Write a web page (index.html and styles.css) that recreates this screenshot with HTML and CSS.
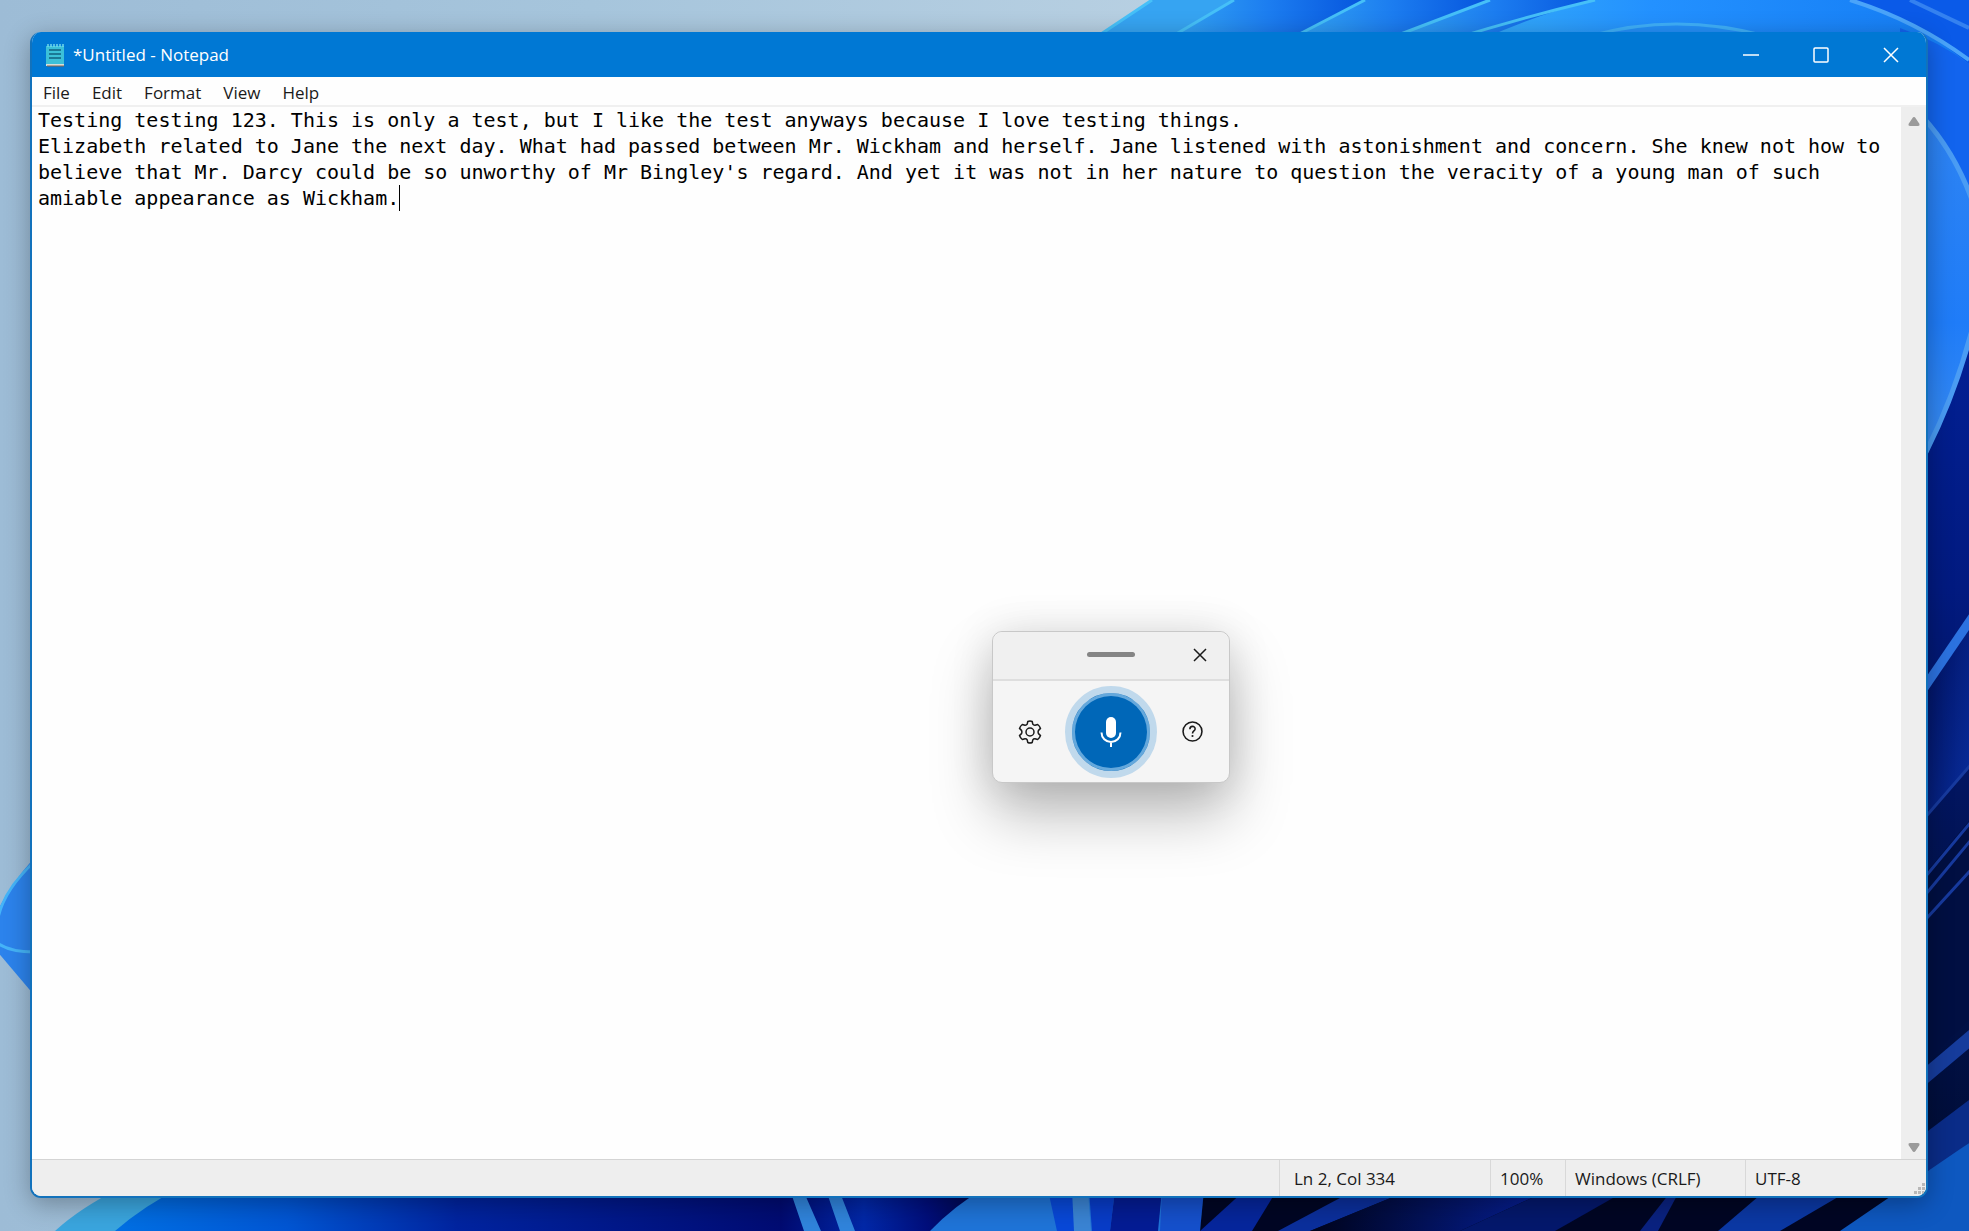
FILE: index.html
```html
<!DOCTYPE html>
<html lang="en">
<head>
  <meta charset="UTF-8" />
  <meta name="viewport" content="width=device-width, initial-scale=1.0" />
  <title>*Untitled - Notepad</title>
  <link rel="stylesheet" href="styles.css">
</head>
<body>

  <svg class="wallpaper" viewBox="0 0 1969 1231" preserveAspectRatio="none" aria-hidden="true">
    <defs>
      <linearGradient id="sky" x1="0" y1="0" x2="1" y2="0">
        <stop offset="0" stop-color="#9dbcd6" />
        <stop offset="0.3" stop-color="#a6c5dc" />
        <stop offset="0.6" stop-color="#b8d0e2" />
      </linearGradient>
      <linearGradient id="ribbon" x1="0" y1="0" x2="1" y2="0">
        <stop offset="0" stop-color="#36a8f4" />
        <stop offset="0.5" stop-color="#1c7df0" />
        <stop offset="1" stop-color="#0452dc" />
      </linearGradient>
      <linearGradient id="bloom" x1="0" y1="0" x2="1" y2="0">
        <stop offset="0" stop-color="#38b0f8" />
        <stop offset="0.4" stop-color="#2391ff" />
        <stop offset="1" stop-color="#147cf4" />
      </linearGradient>
      <linearGradient id="petal" x1="0" y1="0" x2="0" y2="1">
        <stop offset="0" stop-color="#2f84f2" />
        <stop offset="0.6" stop-color="#1f7cf8" />
        <stop offset="1" stop-color="#3c8df0" />
      </linearGradient>
      <linearGradient id="deep" x1="0" y1="0" x2="1" y2="0">
        <stop offset="0" stop-color="#0070e4" />
        <stop offset="0.25" stop-color="#0056d4" />
        <stop offset="0.5" stop-color="#0024a0" />
        <stop offset="1" stop-color="#000a70" />
      </linearGradient>
      <linearGradient id="shade" x1="0" y1="0" x2="1" y2="0">
        <stop offset="0" stop-color="#000a70" />
        <stop offset="0.4" stop-color="#0228a8" />
        <stop offset="0.7" stop-color="#000e7c" />
        <stop offset="1" stop-color="#00053c" />
      </linearGradient>
      <linearGradient id="night" x1="0" y1="0" x2="0" y2="1">
        <stop offset="0" stop-color="#02229c" />
        <stop offset="0.35" stop-color="#021a80" />
        <stop offset="0.6" stop-color="#021458" />
        <stop offset="1" stop-color="#000c30" />
      </linearGradient>
      <linearGradient id="fold" x1="0" y1="0" x2="1" y2="1">
        <stop offset="0" stop-color="#000b50" />
        <stop offset="1" stop-color="#0a34ae" />
      </linearGradient>
      <linearGradient id="dusk" x1="0" y1="0" x2="1" y2="0">
        <stop offset="0" stop-color="#00041c" />
        <stop offset="1" stop-color="#06209a" />
      </linearGradient>
    </defs>

    <rect width="1969" height="1231" fill="url(#sky)" />

    <!-- top ribbons -->
    <path d="M1152 0H1969V40H1092Z" fill="#36a4f2" />
    <path d="M1234 0H1372L1294 40H1166Z" fill="url(#ribbon)" />
    <path d="M1365 0H1496L1392 40H1288Z" fill="url(#ribbon)" />
    <path d="M1490 0H1605L1500 40H1385Z" fill="url(#ribbon)" />
    <path d="M1850 0H1969V140H1900Z" fill="#0a5ae8" />
    <path d="M1595 0H1850Q1915 20 1969 64V240H1900V60H1440Q1520 18 1595 0Z" fill="url(#bloom)" />
    <path d="M1152 0L1092 40M1234 0L1166 40M1365 0L1288 40M1490 0L1385 40M1595 0Q1520 18 1450 40" fill="none" stroke="#46c0f8" stroke-width="3" />
    <path d="M1900 28Q1940 42 1969 64V240H1900Z" fill="#1264ee" />
    <path d="M1850 0Q1915 20 1969 60" fill="none" stroke="#4aa4fa" stroke-width="4" />
    <path d="M1910 0L1969 28" stroke="#3481f0" stroke-width="4" />
    <path d="M1590 36Q1675 12 1766 36" fill="#2490fa" stroke="#3fb0fa" stroke-width="3" />

    <!-- right side petal -->
    <path d="M1910 240H1969V1231H1910Z" fill="url(#night)" />
    <path d="M1910 105Q1956 145 1972 205V330Q1955 400 1920 468H1900Z" fill="url(#petal)" />
    <path d="M1914 108Q1952 145 1972 200M1972 330Q1955 395 1926 452" fill="none" stroke="#4a9cf4" stroke-width="5" />
    <path d="M1920 694L1969 620V766L1920 822Z" fill="url(#fold)" opacity="0.8" />
    <path d="M1920 694L1980 606" stroke="#2c72e0" stroke-width="9" />
    <path d="M1920 880L1969 821V1020L1920 1066Z" fill="#010f42" />
    <path d="M1916 828L1980 754M1916 888L1980 811M1916 906L1980 829M1916 930L1980 860" stroke="#173a9e" stroke-width="3" />
    <path d="M1916 1084L1980 1030" stroke="#163c9c" stroke-width="14" />
    <path d="M1916 1184L1969 1143V1100L1916 1140Z" fill="#0a2c88" />

    <!-- left petal -->
    <path d="M34 858Q6 890 -4 915V950L40 1002Z" fill="#2c83ec" />
    <path d="M34 862Q4 890 -2 918M-4 942Q8 952 34 952" fill="none" stroke="#45b4f8" stroke-width="3" />

    <!-- bottom edge -->
    <path d="M120 1188H1969V1231H55Q80 1208 120 1188Z" fill="#3aa5de" />
    <path d="M180 1188H800V1231H115Q145 1205 180 1188Z" fill="url(#deep)" />
    <path d="M780 1188H990V1231H780Z" fill="url(#shade)" />
    <path d="M790 1190H803L821 1231H804ZM826 1190H839L855 1231H840Z" fill="#3084dc" />
    <path d="M985 1188H1290V1231H930Q955 1205 985 1188Z" fill="#1f74d8" />
    <path d="M1048 1190H1074V1231H1057Z" fill="#0848d8" />
    <path d="M1072 1190H1088L1091 1231H1074Z" fill="#3a84d4" />
    <path d="M1089 1190H1115L1110 1231H1092Z" fill="#083cc8" />
    <path d="M1115 1190H1162L1158 1231H1110Z" fill="#041c94" />
    <path d="M1162 1190H1204L1200 1231H1160Z" fill="#1550cc" />
    <path d="M1204 1190H1969V1231H1200Z" fill="#010624" />
    <path d="M1245 1190H1277L1252 1231H1200Z" fill="#06269c" />
    <path d="M1355 1190H1410L1310 1231H1278Z" fill="#0b2f9c" />
    <path d="M1410 1190H1549L1460 1231H1310Z" fill="url(#dusk)" />
    <path d="M1549 1190H1627L1555 1231H1460Z" fill="#04186c" />
    <path d="M1672 1190H1680L1658 1231H1640Z" fill="#0a2280" />
    <path d="M1766 1190H1850L1780 1231H1718Z" fill="#0b38a4" />
    <path d="M1840 1231L1969 1143V1231Z" fill="#0e58c0" />
  </svg>

  <main class="window">
    <header class="titlebar">
      <svg class="app-icon" viewBox="0 0 20 24" aria-hidden="true">
        <path d="M1 3h18v19H1z" fill="#3cc0d8" />
        <path d="M1 21h18v2H1z" fill="#d3dedc" />
        <path d="M2 23h17" stroke="#8b6548" />
        <path d="M3 1v3M6 1v3M9 1v3M12 1v3M15 1v3M18 1v3" stroke="#6fd8ec" stroke-width="1.500" />
        <path d="M4 7h12M4 11h12M4 15h12" stroke="#116080" stroke-width="1.500" />
      </svg>
      <h1>*Untitled - Notepad</h1>
      <div class="window-buttons">
        <button type="button" aria-label="Minimize"><svg viewBox="0 0 16 16"><path d="M0 8h16" /></svg></button>
        <button type="button" aria-label="Maximize"><svg viewBox="0 0 16 16"><rect x="1" y="1" width="14" height="14" rx="1" /></svg></button>
        <button type="button" aria-label="Close"><svg viewBox="0 0 16 16"><path d="M1 1l14 14M15 1L1 15" /></svg></button>
      </div>
    </header>

    <nav class="menu">
      <button type="button">File</button>
      <button type="button">Edit</button>
      <button type="button">Format</button>
      <button type="button">View</button>
      <button type="button">Help</button>
    </nav>

    <div class="editor">
      <textarea aria-label="Text editor" spellcheck="false">Testing testing 123. This is only a test, but I like the test anyways because I love testing things.
Elizabeth related to Jane the next day. What had passed between Mr. Wickham and herself. Jane listened with astonishment and concern. She knew not how to believe that Mr. Darcy could be so unworthy of Mr Bingley's regard. And yet it was not in her nature to question the veracity of a young man of such amiable appearance as Wickham.</textarea>
      <span class="caret"></span>
      <div class="scrollbar">
        <button type="button" aria-label="Scroll up"><svg viewBox="0 0 12 9"><path d="M6 0q1 0 1.500 1l4 6q.5 2-1.500 2H2Q0 9 .5 7l4-6Q5 0 6 0z" /></svg></button>
        <button type="button" aria-label="Scroll down"><svg viewBox="0 0 12 9"><path d="M6 9q-1 0-1.500-1l-4-6Q0 0 2 0h8q2 0 1.500 2l-4 6Q7 9 6 9z" /></svg></button>
      </div>
    </div>

    <footer class="statusbar">
      <span class="position">Ln 2, Col 334</span>
      <span class="zoom">100%</span>
      <span class="ending">Windows (CRLF)</span>
      <span class="encoding">UTF-8</span>
      <svg class="grip" viewBox="0 0 12 12" aria-hidden="true"><path d="M9 0h3v3H9zM5 4h3v3H5zM9 4h3v3H9zM1 8h3v3H1zM5 8h3v3H5zM9 8h3v3H9z" /></svg>
    </footer>
  </main>

  <section class="voice" aria-label="Voice typing">
    <div class="voice-top">
      <span class="handle"></span>
      <button type="button" aria-label="Close voice typing"><svg viewBox="0 0 14 14"><path d="M1 1l12 12M13 1L1 13" /></svg></button>
    </div>
    <div class="voice-body">
      <button type="button" aria-label="Settings">
        <svg class="gear" viewBox="0 0 24 24">
          <path d="M9.800 1.500Q12 .5 14.200 1.500L14.800 4.200Q15.500 5.400 17 5.300L19.700 4.500Q21.700 6 22.500 8.400L20.500 10.400Q19.700 12 20.500 13.600L22.500 15.600Q21.700 18 19.700 19.500L17 18.700Q15.500 18.600 14.800 19.800L14.200 22.500Q12 23.500 9.800 22.500L9.200 19.800Q8.500 18.600 7 18.700L4.300 19.500Q2.300 18 1.500 15.600L3.500 13.600Q4.300 12 3.500 10.400L1.500 8.400Q2.300 6 4.300 4.500L7 5.300Q8.500 5.400 9.200 4.200Z" />
          <circle cx="12" cy="12" r="4" />
        </svg>
      </button>
      <button type="button" class="mic" aria-label="Stop listening">
        <svg viewBox="0 0 22 30">
          <rect x="6" y="0" width="10" height="21" rx="5" fill="#fff" />
          <path d="M1.500 15.500a9.500 9.500 0 0 0 19 0M11 25v5" fill="none" stroke="#fff" stroke-width="2" />
        </svg>
      </button>
      <button type="button" aria-label="Help">
        <svg class="help" viewBox="0 0 20 20">
          <circle cx="10" cy="10" r="9" />
          <path d="M7.500 7.800c0-3.600 5-3.400 5-.3 0 2-2.500 2-2.500 4.300" />
          <circle class="dot" cx="10" cy="14.300" r="1" />
        </svg>
      </button>
    </div>
  </section>

</body>
</html>
```
FILE: styles.css
```css
* {
  box-sizing: border-box;
}
body {
  margin: 0;
  height: 100vh;
  padding: 32px 41px 33px 30px;
  overflow: hidden;
  font-family: "Open Sans", "Noto Sans", sans-serif;
  font-size: 17px;
  color: #1a1a1a;
}
button {
  display: flex;
  align-items: center;
  justify-content: center;
  padding: 0;
  border: none;
  background: none;
  font: inherit;
  color: inherit;
}
.wallpaper {
  position: absolute;
  inset: 0;
  z-index: -1;
  width: 100%;
  height: 100%;
}

/* notepad window */
.window {
  display: flex;
  flex-direction: column;
  height: 100%;
  border: 2px solid #1272bc;
  border-top: none;
  border-radius: 11px;
  background: #fefefe;
  overflow: hidden;
  box-shadow: 0 6px 26px rgba(0, 0, 0, 0.3);
}
.titlebar {
  display: flex;
  align-items: center;
  height: 45px;
  padding-left: 13px;
  background: #0078d4;
  color: white;
}
.app-icon {
  width: 20px;
  height: 24px;
}
h1 {
  margin: 0 auto 0 8px;
  font-size: 17px;
  font-weight: normal;
}
.window-buttons {
  display: flex;
  height: 100%;
}
.window-buttons button {
  width: 70px;
}
.window-buttons svg {
  width: 16px;
  height: 16px;
  fill: none;
  stroke: white;
  stroke-width: 1.5;
}
.menu {
  display: flex;
  gap: 22px;
  height: 30px;
  padding: 2px 0 0 11px;
  border-bottom: 2px solid #f0f0f0;
}

/* text area */
.editor {
  position: relative;
  display: flex;
  flex: 1;
}
textarea {
  flex: 1;
  padding: 0 0 0 6px;
  border: none;
  outline: none;
  resize: none;
  overflow: hidden;
  background: #fefefe;
  color: black;
  font: 20px/26px "DejaVu Sans Mono", "Liberation Mono", monospace;
}
.caret {
  position: absolute;
  left: 367px;
  top: 78px;
  width: 1px;
  height: 26px;
  background: black;
}
.scrollbar {
  display: flex;
  flex-direction: column;
  justify-content: space-between;
  width: 25px;
  background: #eeeeee;
}
.scrollbar button {
  height: 29px;
}
.scrollbar button:last-child {
  height: 24px;
}
.scrollbar svg {
  width: 12px;
  height: 9px;
  fill: #9a9a9a;
}

/* status bar */
.statusbar {
  position: relative;
  display: flex;
  justify-content: flex-end;
  height: 37px;
  border-top: 1px solid #d4d4d4;
  background: #eeeeee;
  line-height: 38px;
}
.statusbar span {
  border-left: 1px solid #d8d8d8;
}
.position {
  width: 211px;
  padding-left: 14px;
}
.zoom {
  width: 75px;
  padding-left: 9px;
}
.ending {
  width: 180px;
  padding-left: 9px;
}
.encoding {
  width: 181px;
  padding-left: 9px;
}
.grip {
  position: absolute;
  right: 1px;
  bottom: 1px;
  width: 12px;
  height: 12px;
  fill: #b8b8b8;
}

/* voice typing popup */
.voice {
  position: absolute;
  left: 992px;
  top: 631px;
  width: 238px;
  border: 1px solid #c8c8c8;
  border-radius: 10px;
  background: #f5f5f5;
  box-shadow: 0 32px 60px rgba(0, 0, 0, 0.26), 0 2px 44px rgba(0, 0, 0, 0.12);
}
.voice-top {
  display: grid;
  grid-template-columns: 1fr 48px 1fr;
  align-items: center;
  height: 49px;
  padding-bottom: 2px;
  border-bottom: 2px solid #dedede;
  border-radius: 10px 10px 0 0;
  background: #f0f0f0;
}
.handle {
  grid-column: 2;
  height: 5px;
  border-radius: 3px;
  background: #858585;
}
.voice-top button {
  justify-self: end;
  width: 58px;
  height: 44px;
}
.voice svg {
  fill: none;
  stroke: #1a1a1a;
  stroke-width: 1.5;
}
.voice-top svg {
  width: 14px;
  height: 14px;
}
.voice-body {
  display: grid;
  grid-template-columns: 70px 92px 70px;
  justify-content: center;
  align-items: center;
  justify-items: center;
  height: 101px;
}
.voice-body .gear {
  width: 24px;
  height: 24px;
  stroke-linejoin: round;
}
.voice-body .help {
  width: 21px;
  height: 21px;
}
.help .dot {
  fill: #1a1a1a;
  stroke: none;
}
.mic {
  width: 92px;
  height: 92px;
  border: 7px solid #c0d9ec;
  border-radius: 50%;
  background: #0067b8;
  box-shadow: inset 0 0 0 3px #64a8dc;
}
.voice .mic svg {
  width: 22px;
  height: 30px;
  stroke: none;
}
```
